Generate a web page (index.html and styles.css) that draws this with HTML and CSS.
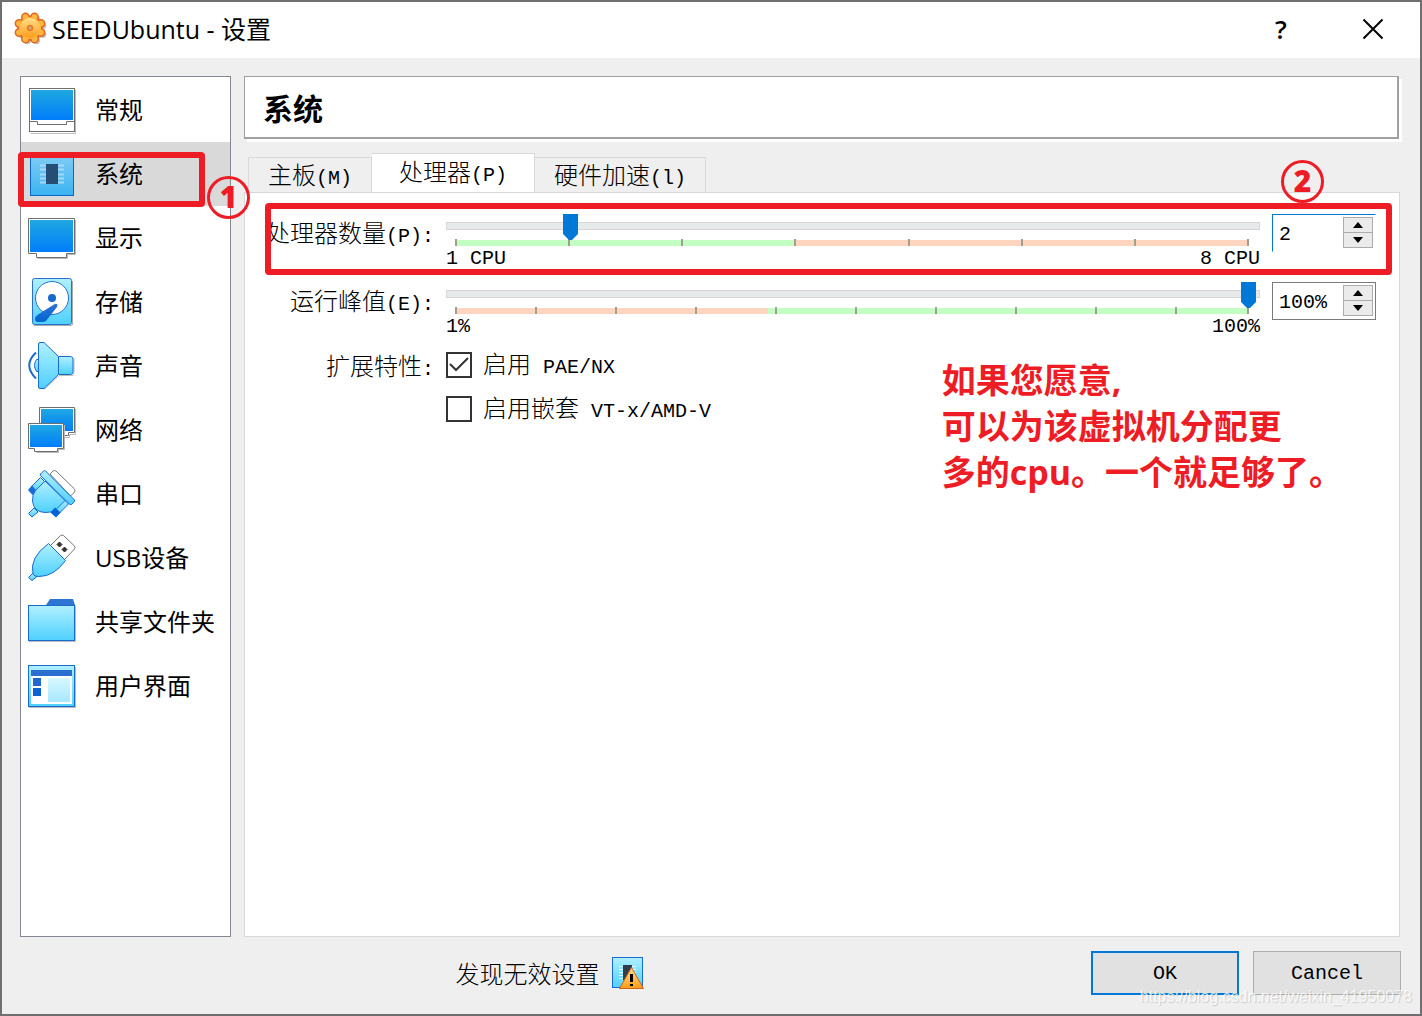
FILE: index.html
```html
<!DOCTYPE html>
<html lang="zh-CN">
<head>
    <meta charset="UTF-8">
    <meta name="viewport" content="width=device-width, initial-scale=1.0">
    <title>SEEDUbuntu - 设置</title>
    <link rel="stylesheet" href="styles.css">
</head>
<body>
    <!-- shared gradients for the icons -->
    <svg class="defs" width="0" height="0" aria-hidden="true">
        <defs>
            <linearGradient id="screen" x1="0" y1="0" x2="0" y2="1">
                <stop offset="0" stop-color="#1fa8e0"/>
                <stop offset="1" stop-color="#007dfb"/>
            </linearGradient>
            <linearGradient id="sky" x1="0" y1="0" x2="0" y2="1">
                <stop offset="0" stop-color="#b0f0ff"/>
                <stop offset="1" stop-color="#4fd0ff"/>
            </linearGradient>
            <linearGradient id="navy" x1="0" y1="0" x2="0" y2="1">
                <stop offset="0" stop-color="#2e74d2"/>
                <stop offset="1" stop-color="#0464d4"/>
            </linearGradient>
            <linearGradient id="chip" x1="0" y1="0" x2="0" y2="1">
                <stop offset="0" stop-color="#84cdf4"/>
                <stop offset="1" stop-color="#3bb4f2"/>
            </linearGradient>
            <linearGradient id="orange" x1="0" y1="0" x2="0" y2="1">
                <stop offset="0" stop-color="#ffe08a"/>
                <stop offset="1" stop-color="#ff9c1a"/>
            </linearGradient>
            <!-- gear silhouette: round body with eight round teeth -->
            <g id="gear">
                <circle cx="16" cy="16" r="11"/>
                <circle cx="20.500" cy="5.100" r="3"/>
                <circle cx="26.900" cy="11.500" r="3"/>
                <circle cx="26.900" cy="20.500" r="3"/>
                <circle cx="20.500" cy="26.900" r="3"/>
                <circle cx="11.500" cy="26.900" r="3"/>
                <circle cx="5.100" cy="20.500" r="3"/>
                <circle cx="5.100" cy="11.500" r="3"/>
                <circle cx="11.500" cy="5.100" r="3"/>
            </g>
        </defs>
    </svg>

    <div class="window">
        <header class="titlebar">
            <svg class="logo" width="34" height="34" viewBox="0 0 34 34">
                <use href="#gear" x="2" y="2" fill="#8a7f7a" stroke="#8a7f7a" opacity=".5"/>
                <use href="#gear" fill="#e4641e" stroke="#e4641e" stroke-width="3"/>
                <use href="#gear" fill="#ffb640"/>
                <circle cx="16" cy="16" r="10" fill="url(#orange)"/>
                <circle cx="16" cy="16" r="2.500" fill="#d9a070" stroke="#e2802a" stroke-width="1.500"/>
            </svg>
            <h1>SEEDUbuntu - 设置</h1>
            <button class="win-btn" aria-label="Help">?</button>
            <button class="win-btn" aria-label="Close">
                <svg width="22" height="22" viewBox="0 0 22 22"><path d="M1.500 1.500L20.500 20.500M20.500 1.500L1.500 20.500" stroke="#000" stroke-width="2"/></svg>
            </button>
        </header>

        <main class="content">
            <nav class="sidebar">
                <a href="#" class="item">
                    <svg class="icon" viewBox="0 0 48 48">
                        <path d="M3 47.500H47.500V4" fill="none" stroke="#bbb"/>
                        <rect x="1.500" y="2.500" width="45" height="43" fill="#fff" stroke="#6e6e6e"/>
                        <rect x="3" y="4" width="42" height="30" fill="url(#screen)"/>
                        <path d="M1.500 35.500h8v3h29v-3h8" fill="none" stroke="#6e6e6e"/>
                    </svg>
                    <span>常规</span>
                </a>
                <a href="#" class="item active">
                    <svg class="icon" viewBox="0 0 48 48">
                        <rect x="2.500" y="2.500" width="43" height="43" fill="url(#chip)" stroke="#0b67cc"/>
                        <path d="M12 15.500h24M12 19.500h24M12 24.500h24M12 28.500h24M12 32.500h24" stroke="#a9d8f6" stroke-width="2"/>
                        <rect x="18" y="14" width="12" height="20" fill="#264e74"/>
                    </svg>
                    <span>系统</span>
                    <i class="mark-box"></i>
                    <b class="mark-num">1</b>
                </a>
                <a href="#" class="item">
                    <svg class="icon" viewBox="0 0 48 48">
                        <path d="M47.500 6v34.500h-8v4h-30" fill="none" stroke="#bbb"/>
                        <path d="M.5 4.500h46v35h-8v4h-30v-4h-8z" fill="#fff" stroke="#6e6e6e"/>
                        <rect x="2" y="6" width="43" height="32" fill="url(#screen)"/>
                    </svg>
                    <span>显示</span>
                </a>
                <a href="#" class="item">
                    <svg class="icon" viewBox="0 0 48 48">
                        <path d="M6 47.500H43q1.500 0 1.500-1.500V3" fill="none" stroke="#aaa"/>
                        <rect x="4.500" y=".5" width="39" height="46" rx="2" fill="url(#sky)" stroke="#2a71cf"/>
                        <circle cx="24" cy="20" r="16.500" fill="#fff" stroke="#2a71cf"/>
                        <circle cx="24" cy="20" r="4" fill="#1668cc"/>
                        <path d="M29.500 26.500Q28 25 26 26.500L10 36.500Q7 38.500 7 41Q7 44 10 44H15Q18 44 19.500 41L29 29z" fill="url(#navy)"/>
                    </svg>
                    <span>存储</span>
                </a>
                <a href="#" class="item">
                    <svg class="icon" viewBox="0 0 48 48">
                        <path d="M16 47.500L31.500 33.500H45q1-1 1-3V16" fill="none" stroke="#bbb"/>
                        <path d="M8 10.500Q-5.500 23 8 36.500" fill="none" stroke="#1a6bd0" stroke-width="2"/>
                        <path d="M10.500 17.500h-2q-4 6 0 12h2z" fill="url(#sky)" stroke="#1a6bd0"/>
                        <path d="M30.500 14.500H42.500q2.500 0 2.500 3v12q0 3-2.500 3H30.500z" fill="url(#sky)" stroke="#1a6bd0"/>
                        <path d="M10.500 2q0-1.500 1.500-1.500h4L30.500 14.500v18L16 46.500h-4q-1.500 0-1.500-1.500z" fill="url(#sky)" stroke="#1a6bd0"/>
                    </svg>
                    <span>声音</span>
                </a>
                <a href="#" class="item">
                    <svg class="icon" viewBox="0 0 48 48">
                        <path d="M47.500 3v25.500h-6v3h-5" fill="none" stroke="#bbb"/>
                        <path d="M11.500 1.500h35v25h-6v3h-23v-3h-6z" fill="#fff" stroke="#6e6e6e"/>
                        <rect x="13" y="3" width="32" height="22" fill="url(#screen)"/>
                        <path d="M36.500 19v24.500h-6v3h-22" fill="none" stroke="#bbb"/>
                        <path d="M.5 17.500h35v25h-6v3h-23v-3h-6z" fill="#fff" stroke="#6e6e6e"/>
                        <rect x="2" y="19" width="32" height="22" fill="url(#screen)"/>
                    </svg>
                    <span>网络</span>
                </a>
                <a href="#" class="item">
                    <svg class="icon" viewBox="0 0 48 48">
                        <path d="M22 4l3-3q1.500-1 3 0L46.500 19q1 1.500 0 3l-4 4z" fill="#fff" stroke="#777"/>
                        <path d="M12.500 7.500l5 5L8 22l-5-5z" fill="url(#sky)" stroke="#1a6bd0"/>
                        <path d="M0 20l4-4.500L9 21l-4.500 4z" fill="#1a6bd8"/>
                        <path d="M35.500 29l5 5L30 44.500l-5-5z" fill="url(#sky)" stroke="#1a6bd0"/>
                        <path d="M.5 43.500l5.500-5.500 4 4L4 47z" fill="url(#sky)" stroke="#1a6bd0"/>
                        <path d="M17 11L7.500 20.500Q4 25 4.500 31Q5.500 42 17 42.500Q23 42.500 27 40.500L37 30.500z" fill="url(#sky)" stroke="#1a6bd0"/>
                        <path d="M22.500 42.500l4.500-5 5.500 5L28 47.500z" fill="#0464d4"/>
                        <path d="M12.500 4l3-3q1-1 2 0L46.500 30v1.500l-3 3h-1.500L12.500 5.500z" fill="url(#sky)" stroke="#1a6bd0"/>
                    </svg>
                    <span>串口</span>
                </a>
                <a href="#" class="item">
                    <svg class="icon" viewBox="0 0 48 48">
                        <path d="M22.500 11.500L32.500 1.500q1.500-1 3 0L46.500 12q1 1.500 0 3L36.500 25.500z" fill="#fff" stroke="#777"/>
                        <path d="M29 10.500l2.500-2.500 2.500 2.500-2.500 2.500zM34 15.500l2.500-2.500 2.500 2.500-2.500 2.500z" fill="#333" stroke="#333" stroke-linejoin="round"/>
                        <path d="M.5 43.500l5-5 3.500 4L4 46.500z" fill="url(#sky)" stroke="#1a6bd0"/>
                        <path d="M20.500 9.500L37.500 26.500Q26 42.500 11 42.500L7 42l-2-2Q1 24 20.500 9.500z" fill="url(#sky)" stroke="#1a6bd0"/>
                    </svg>
                    <span>USB设备</span>
                </a>
                <a href="#" class="item">
                    <svg class="icon" viewBox="0 0 48 48">
                        <path d="M1 43.500h46.500V8" fill="none" stroke="#bbb"/>
                        <path d="M18 7l4-6h23l2 6z" fill="#2e74d2"/>
                        <rect x=".5" y="7.500" width="46" height="35" fill="url(#sky)" stroke="#1a6bd0"/>
                    </svg>
                    <span>共享文件夹</span>
                </a>
                <a href="#" class="item">
                    <svg class="icon" viewBox="0 0 48 48">
                        <path d="M1 45.500h46.500V5" fill="none" stroke="#bbb"/>
                        <rect x=".5" y="3.500" width="46" height="41" fill="url(#sky)" stroke="#1a6bd0"/>
                        <rect x="3" y="14" width="41" height="28" fill="#fff"/>
                        <rect x="3" y="8" width="41" height="6" fill="#2a6fd0"/>
                        <rect x="5" y="16" width="8" height="8" fill="#2068d0"/>
                        <rect x="5" y="26" width="8" height="8" fill="#0a64d4"/>
                        <rect x="20" y="16" width="22" height="24" fill="url(#sky)" opacity=".5"/>
                    </svg>
                    <span>用户界面</span>
                </a>
            </nav>

            <section class="page">
                <h2 class="heading">系统</h2>

                <div class="tabs" role="tablist">
                    <button class="tab" role="tab">主板<span class="en">(M)</span></button>
                    <button class="tab selected" role="tab" aria-selected="true">处理器<span class="en">(P)</span></button>
                    <button class="tab" role="tab">硬件加速<span class="en">(l)</span></button>
                </div>

                <div class="panel">
                    <form class="form">
                        <label class="name" for="cpus">处理器数量<span class="en">(P):</span></label>
                        <div class="slider">
                            <input type="range" id="cpus" min="1" max="8" value="2">
                            <div class="scale cpu-scale">
                                <i></i><i></i><i></i><i></i><i></i><i></i><i></i>
                            </div>
                            <div class="limits en"><span>1 CPU</span><span>8 CPU</span></div>
                        </div>
                        <div class="spin focused">
                            <input type="text" class="en" value="2" aria-label="处理器数量">
                            <div class="arrows">
                                <button type="button" aria-label="+"><svg width="10" height="6"><path d="M5 0L10 6H0z"/></svg></button>
                                <button type="button" aria-label="-"><svg width="10" height="6"><path d="M0 0H10L5 6z"/></svg></button>
                            </div>
                        </div>

                        <label class="name" for="cap">运行峰值<span class="en">(E):</span></label>
                        <div class="slider">
                            <input type="range" id="cap" min="1" max="100" value="100">
                            <div class="scale cap-scale">
                                <i></i><i></i><i></i><i></i><i></i><i></i><i></i><i></i><i></i><i></i>
                            </div>
                            <div class="limits en"><span>1%</span><span>100%</span></div>
                        </div>
                        <div class="spin">
                            <input type="text" class="en" value="100%" aria-label="运行峰值">
                            <div class="arrows">
                                <button type="button" aria-label="+"><svg width="10" height="6"><path d="M5 0L10 6H0z"/></svg></button>
                                <button type="button" aria-label="-"><svg width="10" height="6"><path d="M0 0H10L5 6z"/></svg></button>
                            </div>
                        </div>

                        <span class="name features">扩展特性<span class="en">:</span></span>
                        <div class="checks">
                            <label><input type="checkbox" checked><span>启用<span class="en"> PAE/NX</span></span></label>
                            <label><input type="checkbox"><span>启用嵌套<span class="en"> VT-x/AMD-V</span></span></label>
                        </div>
                    </form>

                    <i class="mark-box"></i>
                    <b class="mark-num">2</b>
                    <p class="note">如果您愿意,<br>可以为该虚拟机分配更<br>多的cpu。一个就足够了。</p>
                </div>
            </section>
        </main>

        <footer class="footer">
            <div class="status">
                <span>发现无效设置</span>
                <svg width="32" height="32" viewBox="0 0 32 32">
                    <rect x=".5" y=".5" width="30" height="30" fill="url(#sky)" stroke="#1a6bd0"/>
                    <path d="M7 9.500h17M7 12.500h17M7 15.500h17M7 18.500h17M7 21.500h17" stroke="#e6faff"/>
                    <rect x="11" y="8" width="9" height="15" fill="#333c48"/>
                    <path d="M19.500 10.500L31.500 31.500H7.500z" fill="url(#orange)" stroke="#d2621c" stroke-linejoin="round"/>
                    <path d="M18 17h3v8h-3zM18 27h3v2h-3z"/>
                </svg>
            </div>
            <button class="btn primary">OK</button>
            <button class="btn">Cancel</button>
        </footer>
        <div class="watermark">https://blog.csdn.net/weixin_41950078</div>
    </div>
</body>
</html>
```
FILE: styles.css
```css
* {
    box-sizing: border-box;
}

body {
    margin: 0;
    padding: 2px;
    min-height: 100vh;
    display: flex;
    background: #706e70;
    font-family: "Noto Sans CJK SC", sans-serif;
    font-size: 24px;
    line-height: 30px;
    color: #000;
}

h1, h2, p {
    margin: 0;
}

button, input {
    font: inherit;
    color: inherit;
    margin: 0;
}

.defs {
    position: absolute;
}

.en {
    font-family: "Liberation Mono", monospace;
    font-size: 20px;
    white-space: pre;
}

.window {
    flex: 1;
    position: relative;
    display: flex;
    flex-direction: column;
    background: #efefef;
}

/* title bar */

.titlebar {
    display: flex;
    align-items: center;
    height: 56px;
    padding: 0 1px 2px 12px;
    background: #fff;
}

.titlebar h1 {
    flex: 1;
    margin-left: 4px;
    font-family: "Open Sans", "Noto Sans CJK SC", sans-serif;
    font-size: 25px;
    font-weight: normal;
}

.win-btn {
    display: flex;
    align-items: center;
    justify-content: center;
    width: 92px;
    height: 54px;
    padding: 0;
    border: none;
    background: none;
    font-family: "Open Sans", sans-serif;
    font-size: 26px;
    font-weight: 600;
}

/* layout */

.content {
    flex: 1;
    display: flex;
    gap: 13px;
    padding: 18px 20px 0 18px;
}

.sidebar {
    width: 211px;
    padding-top: 1px;
    background: #fff;
    border: 1px solid #828790;
    font-family: "Open Sans", "Noto Sans CJK SC", sans-serif;
}

.item {
    position: relative;
    display: flex;
    align-items: center;
    gap: 19px;
    height: 64px;
    padding-left: 7px;
    color: #000;
    text-decoration: none;
    white-space: nowrap;
}

.item.active {
    background: #d9d9d9;
}

.icon {
    width: 48px;
    height: 48px;
}

.page {
    flex: 1;
    display: flex;
    flex-direction: column;
    font-weight: 300;
}

.heading {
    height: 63px;
    padding-left: 18px;
    background: #fff;
    border: 1px solid #a0a0a0;
    border-width: 1px 2px 2px 1px;
    box-shadow: 3px 3px 0 #fff;
    margin-right: 1px;
    font-size: 30px;
    line-height: 60px;
}

.tabs {
    display: flex;
    align-items: flex-end;
    margin-top: 14px;
    padding-left: 4px;
}

.tab {
    height: 35px;
    padding: 0 19px;
    background: #efefef;
    border: 1px solid #d9d9d9;
    border-width: 1px 1px 0 0;
    line-height: 32px;
}

.tab:first-child {
    border-left-width: 1px;
}

.tab.selected {
    position: relative;
    height: 40px;
    margin-bottom: -1px;
    padding: 0 27px;
    background: #fff;
}

.panel {
    flex: 1;
    position: relative;
    background: #fff;
    border: 1px solid #d9d9d9;
}

/* form */

.form {
    display: grid;
    grid-template-columns: auto 1fr 104px;
    gap: 11px 12px;
    align-items: start;
    padding: 21px 23px 0 21px;
}

.name {
    text-align: right;
    line-height: 36px;
}

.name.features {
    line-height: 30px;
}

.slider {
    display: flex;
    flex-direction: column;
}

.slider input {
    appearance: none;
    width: 100%;
    height: 24px;
    background: none;
}

.slider input::-webkit-slider-runnable-track {
    height: 8px;
    background: #e7eaea;
    border: 1px solid #d6d6d6;
}

/* 3px of empty room on each side keeps the pointer over the end ticks */
.slider input::-webkit-slider-thumb {
    appearance: none;
    width: 21px;
    height: 26px;
    margin-top: -9px;
    background: #0078d7;
    clip-path: polygon(3px 0, 18px 0, 18px 20px, 12px 26px, 9px 26px, 3px 20px);
}

.scale {
    display: flex;
    height: 7px;
    margin: 1px 11px 1px 9px;
    border-right: 2px solid #a0a090;
    background-position: 0 1px;
    background-repeat: no-repeat;
}

.scale i {
    flex: 10;
    border-left: 2px solid #a0a090;
}

.cpu-scale {
    background-image: linear-gradient(to right, #c3ffc3 43%, #ffd5c0 43%);
}

.cap-scale {
    background-image: linear-gradient(to right, #ffd5c0 39.5%, #c3ffc3 39.5%);
}

.cap-scale i:last-child {
    flex: 9;
}

.limits {
    display: flex;
    justify-content: space-between;
    line-height: 24px;
}

.spin {
    display: flex;
    height: 38px;
    padding: 2px;
    border: 1px solid #7a7a7a;
}

.spin.focused {
    border-color: #0078d7 transparent transparent #0078d7;
}

.spin input {
    flex: 1;
    min-width: 0;
    padding: 4px 0 0 4px;
    border: none;
    outline: none;
    background: none;
}

.arrows {
    display: flex;
    flex-direction: column;
    width: 30px;
}

.arrows button {
    display: flex;
    align-items: center;
    justify-content: center;
    height: 16px;
    padding: 0;
    background: #ebebeb;
    border: 1px solid #acacac;
}

.arrows button + button {
    margin-top: -1px;
}

.checks {
    display: flex;
    flex-direction: column;
    gap: 14px;
}

.checks label {
    display: flex;
    align-items: center;
    gap: 11px;
    height: 30px;
}

.checks input {
    appearance: none;
    width: 26px;
    height: 26px;
    border: 2px solid #333;
    background: #fff;
}

.checks input:checked {
    background: url('data:image/svg+xml,<svg xmlns="http://www.w3.org/2000/svg" width="22" height="22"><path d="M2 10L8 16L20 4" fill="none" stroke="%23333" stroke-width="2"/></svg>');
}

/* red annotations */

.mark-box {
    position: absolute;
    border: 6px solid #ee1c25;
    border-radius: 4px;
}

.mark-num {
    position: absolute;
    width: 43px;
    height: 43px;
    border: 3px solid #ee1c25;
    border-radius: 50%;
    color: #ee1c25;
    font-family: "Open Sans", sans-serif;
    font-size: 30px;
    font-weight: 800;
    line-height: 36px;
    text-align: center;
}

.item .mark-box {
    top: 10px;
    left: -3px;
    width: 187px;
    height: 55px;
}

.item .mark-num {
    top: 34px;
    left: 186px;
    z-index: 1;
}

.panel .mark-box {
    top: 10px;
    left: 20px;
    right: 7px;
    height: 72px;
}

.panel .mark-num {
    top: -33px;
    right: 75px;
}

.note {
    position: absolute;
    top: 164px;
    right: 56px;
    color: #ee1c25;
    font-family: "Open Sans", "Noto Sans CJK SC", sans-serif;
    font-size: 34px;
    font-weight: bold;
    line-height: 46px;
}

/* footer */

.footer {
    display: flex;
    align-items: center;
    gap: 14px;
    padding: 14px 19px 19px 20px;
}

.status {
    flex: 1;
    display: flex;
    align-items: center;
    justify-content: center;
    gap: 12px;
    font-weight: 300;
}

.btn {
    width: 148px;
    height: 44px;
    padding: 2px 0 0;
    background: #e1e1e1;
    border: 1px solid #adadad;
    font-family: "Liberation Mono", monospace;
    font-size: 20px;
}

.btn.primary {
    border: 2px solid #0078d7;
}

.watermark {
    position: absolute;
    right: 8px;
    bottom: 5px;
    color: rgba(255, 255, 255, 0.8);
    font-family: "Liberation Sans", sans-serif;
    font-size: 16px;
    line-height: 24px;
    text-shadow: 1px 1px 1px rgba(0, 0, 0, 0.15);
    pointer-events: none;
}
```
